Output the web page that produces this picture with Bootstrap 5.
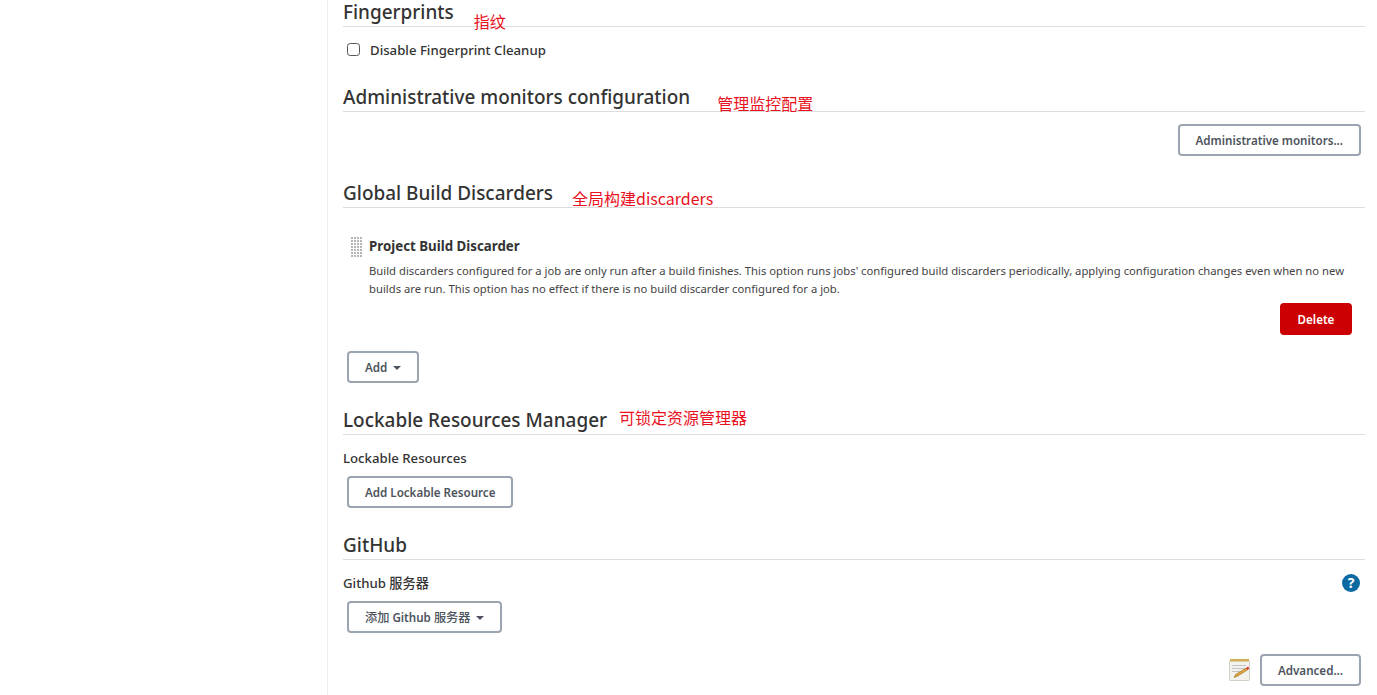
<!DOCTYPE html>
<html lang="en">
<head>
<meta charset="utf-8">
<title>Configure System</title>
<link rel="stylesheet" href="https://cdn.jsdelivr.net/npm/bootstrap@5.3.0/dist/css/bootstrap.min.css">
<style>
html,body{height:695px;overflow:hidden;background:#fff}
body{font-family:"Noto Sans","Noto Sans CJK SC",sans-serif;color:#333;font-size:13.2px}
.side-pane{width:328px;flex:none;border-right:1px solid #eee}
.main-pane{width:1022px;margin-left:15px;flex:none}
.sec-head{height:27px;border-bottom:1px solid #ddd;align-items:flex-end}
.sec-title{font-size:18.95px;font-weight:500;line-height:26px;margin:0 0 1px 0;color:#333;white-space:nowrap}
.note{font-family:"Noto Sans CJK SC",sans-serif;color:#e8111d;font-size:16px;line-height:22px;white-space:nowrap}
.jk-btn{--bs-btn-font-size:11.6px;--bs-btn-font-weight:600;--bs-btn-color:#4d545d;--bs-btn-bg:#fff;--bs-btn-border-color:#9aa5b1;--bs-btn-border-width:2px;--bs-btn-border-radius:4px;--bs-btn-padding-x:16px;--bs-btn-padding-y:0;--bs-btn-line-height:28px;height:32px;padding-top:1px}
.jk-danger{--bs-btn-color:#fff;--bs-btn-bg:#cc0003;--bs-btn-border-color:#cc0003;width:72px}
.jk-label{font-weight:500;line-height:18px}
.chk{width:13px;height:13px;margin:0 0 2px;border:1px solid #555;border-radius:2px;flex:none}
.caret-mark{display:inline-block;border-top:4px solid currentColor;border-left:4px solid transparent;border-right:4px solid transparent;margin-left:6px;vertical-align:2px}
.cjk-part{font-size:12.2px;font-weight:500}
.grip{width:11px;height:20px;flex:none;background-image:radial-gradient(circle at 1px 1px,#b5b5b5 1px,transparent 1.3px);background-size:3px 3px}
.item-title{font-size:13.3px;font-weight:700;line-height:18px}
.item-desc{font-size:11.27px;line-height:18px;color:#444;width:985px;margin-top:7px}
.help-dot{width:18px;height:18px;background:#0b6aa2;color:#fff;font-weight:700;font-size:14px;line-height:18px;border-radius:50%;text-align:center}
.note-a{margin-left:20px;margin-bottom:-6px}
.note-b{margin-left:27px;margin-bottom:-3px}
.note-c{margin-left:19px;margin-bottom:-2px}
.note-d{margin-left:12px;margin-bottom:6px}
.row-check{margin:14px 0 0 4px}
.check-text{margin-left:10px}
.s-admin{margin-top:26px}
.admin-row{margin-top:12px;padding-right:4px}
.s-disc{margin-top:25px}
.disc-item{margin-top:29px;padding-left:8px}
.disc-item .grip+div{margin-left:7px}
.del-row{margin-top:5px;padding-right:13px}
.add-row{margin:16px 0 0 4px}
.s-lock{margin-top:25px}
.lock-label{margin-top:14px}
.add-row2{margin:9px 0 0 4px}
.s-git{margin-top:25px}
.git-label{margin-top:14px;padding-right:5px}
.adv-row{margin-top:21px;padding-right:4px}
</style>
</head>
<body class="d-flex m-0">
<div class="side-pane"></div>
<main class="main-pane">

<section>
  <div class="sec-head d-flex"><h2 class="sec-title">Fingerprints</h2><span class="note note-a">指纹</span></div>
  <label class="d-flex align-items-center jk-label row-check"><input class="form-check-input chk" type="checkbox"><span class="check-text">Disable Fingerprint Cleanup</span></label>
</section>

<section class="s-admin">
  <div class="sec-head d-flex"><h2 class="sec-title">Administrative monitors configuration</h2><span class="note note-b">管理监控配置</span></div>
  <div class="d-flex justify-content-end admin-row"><button class="btn jk-btn" type="button">Administrative monitors...</button></div>
</section>

<section class="s-disc">
  <div class="sec-head d-flex"><h2 class="sec-title">Global Build Discarders</h2><span class="note note-c">全局构建discarders</span></div>
  <div class="d-flex disc-item">
    <div class="grip"></div>
    <div>
      <div class="item-title">Project Build Discarder</div>
      <div class="item-desc">Build discarders configured for a job are only run after a build finishes. This option runs jobs' configured build discarders periodically, applying configuration changes even when no new builds are run. This option has no effect if there is no build discarder configured for a job.</div>
    </div>
  </div>
  <div class="d-flex justify-content-end del-row"><button class="btn jk-btn jk-danger px-0" type="button">Delete</button></div>
  <div class="add-row"><button class="btn jk-btn" type="button">Add<span class="caret-mark"></span></button></div>
</section>

<section class="s-lock">
  <div class="sec-head d-flex"><h2 class="sec-title">Lockable Resources Manager</h2><span class="note note-d">可锁定资源管理器</span></div>
  <div class="jk-label lock-label">Lockable Resources</div>
  <div class="add-row2"><button class="btn jk-btn" type="button">Add Lockable Resource</button></div>
</section>

<section class="s-git">
  <div class="sec-head d-flex"><h2 class="sec-title">GitHub</h2></div>
  <div class="d-flex justify-content-between align-items-center git-label"><span class="jk-label">Github 服务器</span><span class="help-dot">?</span></div>
  <div class="add-row2"><button class="btn jk-btn" type="button"><span class="cjk-part">添加</span> Github <span class="cjk-part">服务器</span><span class="caret-mark"></span></button></div>
  <div class="d-flex justify-content-end align-items-center gap-2 adv-row">
    <svg width="24" height="24" viewBox="0 0 24 24" aria-hidden="true">
      <rect x="1.500" y="2.500" width="20" height="20" rx="1" fill="#f2f2ee" stroke="#cfcfc8"/>
      <rect x="2" y="1" width="19" height="2.500" fill="#cfae55"/>
      <path d="M4 7.500h14M4 10.500h14M4 13.500h8" stroke="#c4c4c4" stroke-width="1"/>
      <path d="M6 19.500l1.500-3L18 10l1.500 2L9 18.500z" fill="#dca33a" stroke="#8f6a24" stroke-width=".5"/>
      <path d="M18 10l1.500 2 1.800-1.500-1.300-2z" fill="#d33a32"/>
    </svg>
    <button class="btn jk-btn" type="button">Advanced...</button>
  </div>
</section>
</main>
</body>
</html>
